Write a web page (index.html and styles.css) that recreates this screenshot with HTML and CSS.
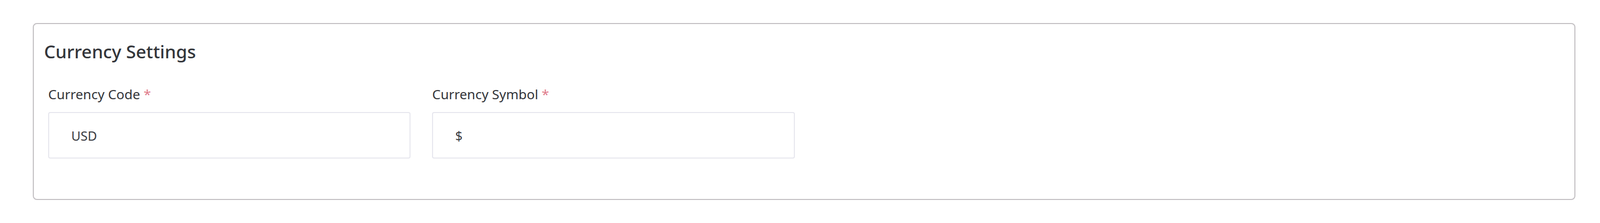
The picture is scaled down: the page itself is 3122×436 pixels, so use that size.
FILE: index.html
```html
<!DOCTYPE html>
<html lang="en">
<head>
    <meta charset="UTF-8">
    <meta name="viewport" content="width=device-width, initial-scale=1.0">
    <title>Currency Settings</title>
    <link rel="stylesheet" href="styles.css">
</head>
<body>
    <section class="card">
        <h2 class="card-title">Currency Settings</h2>
        <div class="form-row">
            <div class="form-group">
                <label for="currency-code">Currency Code <span class="required">*</span></label>
                <input id="currency-code" class="form-control" type="text" value="USD">
            </div>
            <div class="form-group">
                <label for="currency-symbol">Currency Symbol <span class="required">*</span></label>
                <input id="currency-symbol" class="form-control" type="text" value="$">
            </div>
            <div class="form-group"></div>
            <div class="form-group"></div>
        </div>
    </section>
</body>
</html>
```

FILE: styles.css
```css
* {
    margin: 0;
    padding: 0;
    box-sizing: border-box;
    font-family: "Noto Sans", "Open Sans", sans-serif;
}
body {
    background: #fff;
    color: #33353a;
    padding: 45px 48px 0 64px;
}
.card {
    width: 3010px;
    height: 346px;
    border: 2px solid #c3c0c3;
    border-radius: 8px;
    padding: 34px 23px 0 20px;
}
.card-title {
    font-size: 35px;
    font-weight: 500;
    line-height: 40px;
    margin-bottom: 46px;
}
.form-row {
    display: grid;
    grid-template-columns: repeat(4, 1fr);
    column-gap: 42px;
    padding-left: 8px;
}
.form-group label {
    display: block;
    font-size: 26px;
    line-height: 34px;
    margin-bottom: 18px;
}
.required {
    color: #e07a8a;
}
.form-control {
    display: block;
    width: 100%;
    height: 91px;
    border: 2px solid #e7e7ee;
    border-radius: 4px;
    padding: 0 43px;
    font-family: "Noto Sans", sans-serif;
    font-size: 25px;
    color: #3a3c42;
    background: #fff;
    outline: none;
}
```
